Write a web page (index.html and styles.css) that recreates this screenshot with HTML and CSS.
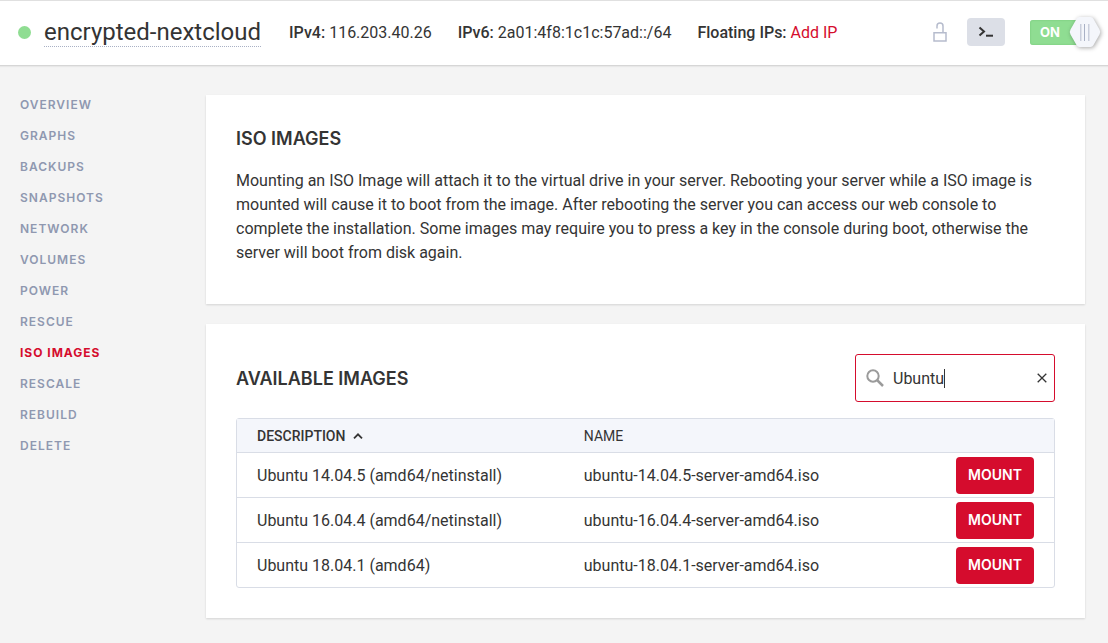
FILE: index.html
```html
<!DOCTYPE html>
<html lang="en">
<head>
<meta charset="utf-8">
<meta name="viewport" content="width=device-width, initial-scale=1">
<title>encrypted-nextcloud – ISO Images</title>
<link rel="stylesheet" href="styles.css">
</head>
<body>
<header class="topbar">
  <span class="status-dot"></span>
  <h1 class="server-name">encrypted-nextcloud</h1>
  <div class="facts">
    <p class="fact"><strong>IPv4:</strong> 116.203.40.26</p>
    <p class="fact"><strong>IPv6:</strong> 2a01:4f8:1c1c:57ad::/64</p>
    <p class="fact"><strong>Floating IPs:</strong> <a href="#add-ip">Add IP</a></p>
  </div>
  <div class="actions">
    <button class="lock-button" type="button" aria-label="Protection">
      <svg width="14" height="20" viewBox="0 0 14 20" fill="none" stroke="#b6bccd" stroke-width="1.5"><path d="M1 10.8h12v8.3H1z"/><path d="M4 6.5V4a3 3 0 0 1 6 0v6.8"/></svg>
    </button>
    <button class="console-button" type="button" aria-label="Console">
      <svg width="16" height="12" viewBox="0 0 16 12" fill="none" stroke="#343434" stroke-width="2"><path d="M1.5 1.5 6 5.5 1.5 9.5"/><path d="M8 9.7h7"/></svg>
    </button>
    <label class="power">
      <input class="power-input" type="checkbox" checked aria-label="Power">
      <span class="power-track">ON</span>
      <svg class="power-knob" width="32" height="32" viewBox="0 0 32 32"><path d="M10.5 1h11q2 0 3 2l6 10.500q1.500 2.500 0 5l-6 10.500q-1 2-3 2h-11q-2 0-3-2l-6-10.500q-1.500-2.500 0-5l6-10.500q1-2 3-2z" fill="#f4f6fb"/><path d="M11.500 8v17M19.500 8v17" stroke="#c9cedc" stroke-width="1"/><path d="M15.500 8v17" stroke="#a9b1c5"/><path d="M12.500 8v17M20.500 8v17" stroke="#dfe2ea"/></svg>
    </label>
  </div>
</header>

<div class="layout">
  <nav class="sidebar" aria-label="Server">
    <a href="#overview">OVERVIEW</a>
    <a href="#graphs">GRAPHS</a>
    <a href="#backups">BACKUPS</a>
    <a href="#snapshots">SNAPSHOTS</a>
    <a href="#network">NETWORK</a>
    <a href="#volumes">VOLUMES</a>
    <a href="#power">POWER</a>
    <a href="#rescue">RESCUE</a>
    <a class="active" href="#iso" aria-current="page">ISO IMAGES</a>
    <a href="#rescale">RESCALE</a>
    <a href="#rebuild">REBUILD</a>
    <a href="#delete">DELETE</a>
  </nav>

  <main class="content">
    <section class="card card-intro">
      <h2 class="card-title">ISO IMAGES</h2>
      <p class="card-text">Mounting an ISO Image will attach it to the virtual drive in your server. Rebooting your server while a ISO image is mounted will cause it to boot from the image. After rebooting the server you can access our web console to complete the installation. Some images may require you to press a key in the console during boot, otherwise the server will boot from disk again.</p>
    </section>

    <section class="card">
      <div class="card-head">
        <h2 class="card-title card-title-inline">AVAILABLE IMAGES</h2>
        <div class="search">
          <svg width="18" height="18" viewBox="0 0 18 18" fill="none" stroke="#9b9b9b" stroke-width="2"><circle cx="7" cy="7" r="5.700"/><path d="m11 11 6 6" stroke-width="2.500"/></svg>
          <div class="search-field">
            <input class="search-input" type="text" value="Ubuntu" aria-label="Search images">
            <span class="caret"></span>
          </div>
          <button class="search-clear" type="button" aria-label="Clear search">
            <svg width="10" height="10" viewBox="0 0 10 10" stroke="#343434" stroke-width="1.300"><path d="m.7.700 8.600 8.600M9.300.700.700 9.300"/></svg>
          </button>
        </div>
      </div>
      <table class="images">
        <thead>
          <tr>
            <th class="col-description" scope="col" aria-sort="ascending"><button class="sort" type="button">DESCRIPTION
              <svg width="10" height="6" viewBox="0 0 10 6" fill="none" stroke="#343434" stroke-width="1.800"><path d="M1 5.300 5 1.300l4 4"/></svg></button></th>
            <th class="col-name" scope="col">NAME</th>
            <th class="col-action" scope="col" aria-label="Action"></th>
          </tr>
        </thead>
        <tbody>
          <tr><td>Ubuntu 14.04.5 (amd64/netinstall)</td><td>ubuntu-14.04.5-server-amd64.iso</td><td class="action"><button class="mount" type="button">MOUNT</button></td></tr>
          <tr><td>Ubuntu 16.04.4 (amd64/netinstall)</td><td>ubuntu-16.04.4-server-amd64.iso</td><td class="action"><button class="mount" type="button">MOUNT</button></td></tr>
          <tr><td>Ubuntu 18.04.1 (amd64)</td><td>ubuntu-18.04.1-server-amd64.iso</td><td class="action"><button class="mount" type="button">MOUNT</button></td></tr>
        </tbody>
      </table>
    </section>
  </main>
</div>
</body>
</html>
```

FILE: styles.css
```css
* { box-sizing: border-box; }

body {
  margin: 0;
  min-height: 100vh;
  background: #f4f4f4;
  color: #343434;
  font: 16px/24px Roboto, sans-serif;
}

h1, h2, p { margin: 0; font-weight: 400; }

a { color: #d50c2d; text-decoration: none; }

button {
  padding: 0;
  border: 0;
  background: none;
  color: inherit;
  font: inherit;
  cursor: pointer;
}

svg { display: block; flex: none; }

/* Top bar */
.topbar {
  display: flex;
  align-items: center;
  min-height: 66px;
  padding: 0 7px 2px 18px;
  background: #fff;
  border-top: 1px solid #e0e0e0;
  border-bottom: 1px solid #d6d6d6;
  box-shadow: 0 1px 1px #e8e8e8;
  white-space: nowrap;
}

.status-dot {
  width: 13px;
  height: 13px;
  margin-right: 13px;
  border-radius: 50%;
  background: #8fdd92;
}

.server-name {
  margin-right: 28px;
  border-bottom: 1px dotted #a9b1c5;
  font-size: 24px;
  line-height: 28px;
}

.facts {
  display: flex;
  gap: 26px;
  padding-top: 2px;
}

.fact strong { font-weight: 500; }

.actions {
  display: flex;
  align-items: center;
  margin-left: auto;
}

.lock-button { margin-right: 20px; }

.console-button {
  display: grid;
  place-items: center;
  width: 38px;
  height: 28px;
  margin-right: 25px;
  border-radius: 4px;
  background: #dcdfe7;
}

.power {
  display: flex;
  align-items: center;
  position: relative;
  width: 71px;
  height: 32px;
  cursor: pointer;
}

.power-input {
  position: absolute;
  inset: 0;
  margin: 0;
  opacity: 0;
}

.power-track {
  width: 54px;
  padding-left: 10px;
  border-radius: 3px;
  background: #8fdd92;
  box-shadow: inset 0 0 2px #6fc374;
  color: #fff;
  font: 700 13px/25px Inter, sans-serif;
}

.power-knob {
  position: absolute;
  right: 0;
  top: 0;
  overflow: visible;
  filter: drop-shadow(1px 1px 2px #0005);
}

/* Page body */
.layout {
  display: grid;
  grid-template-columns: 186px minmax(0, 1fr);
  padding: 29px 23px 24px 20px;
}

.sidebar {
  display: flex;
  flex-direction: column;
  gap: 15px;
  padding-top: 2px;
}

.sidebar a {
  color: #8f98b0;
  font: 600 12px/16px Inter, sans-serif;
  letter-spacing: 1px;
}

.sidebar .active { color: #d50c2d; font-weight: 700; }

.content { display: grid; gap: 20px; }

.card {
  padding: 30px;
  background: #fff;
  box-shadow: 0 1px 2px #0002;
}

.card-intro { padding-bottom: 39px; }

.card-title {
  margin-bottom: 17px;
  font: 600 18px/27px Inter, sans-serif;
}

.card-title-inline { margin-bottom: 0; }

.card-head {
  display: flex;
  align-items: center;
  justify-content: space-between;
  margin-bottom: 16px;
}

.search {
  display: flex;
  align-items: center;
  width: 200px;
  height: 48px;
  padding: 0 7px 0 10px;
  border: 1px solid #d50c2d;
  border-radius: 3px;
}

.search-field {
  position: relative;
  flex: 1;
  min-width: 0;
  margin-left: 9px;
  padding-top: 2px;
}

.search-input {
  display: block;
  width: 100%;
  padding: 0;
  border: 0;
  outline: 0;
  background: none;
  color: inherit;
  font: inherit;
}

.caret {
  position: absolute;
  left: 51px;
  top: 4px;
  width: 1px;
  height: 19px;
  background: #343434;
}

/* Image table */
.images {
  width: 100%;
  table-layout: fixed;
  border: 1px solid #d9dde6;
  border-radius: 3px;
  border-spacing: 0;
}

.images th {
  height: 33px;
  padding: 0 0 0 20px;
  background: #f4f6fb;
  font-size: 14px;
  font-weight: 400;
  line-height: 20px;
  text-align: left;
}

.images td {
  height: 45px;
  padding: 2px 0 0 20px;
  border-top: 1px solid #d9dde6;
}

.col-description { width: 40%; }
.col-action { width: 118px; }

.sort {
  display: flex;
  align-items: center;
  gap: 8px;
  font-weight: 500;
}

.images .action { padding: 0 20px; }

.mount {
  display: block;
  width: 78px;
  height: 37px;
  margin-left: auto;
  border-radius: 4px;
  background: #d50c2d;
  color: #fff;
  font: 600 14px/20px Inter, sans-serif;
}
```
